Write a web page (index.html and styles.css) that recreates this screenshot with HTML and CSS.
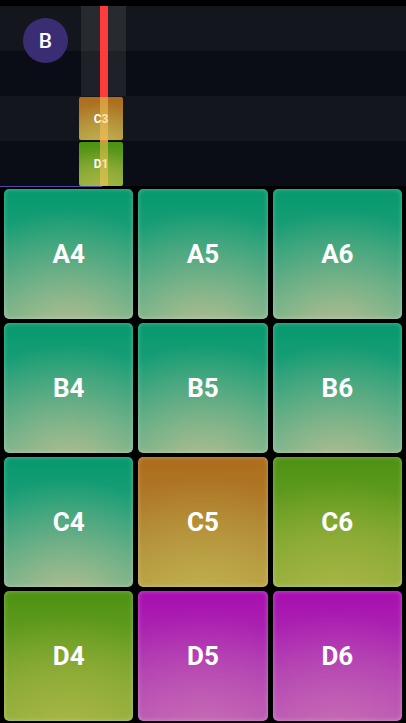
FILE: index.html
```html
<!DOCTYPE html>
<html>
<head>
<meta charset="utf-8">
<link rel="stylesheet" href="styles.css">
</head>
<body>
<div class="app">
  <div class="timeline">
    <div class="row light"></div>
    <div class="row dark"></div>
    <div class="row light"></div>
    <div class="row dark"></div>
    <div class="col-hl"></div>
    <div class="playhead"></div>
    <div class="note note-c3 orange"><span>C3</span></div>
    <div class="note note-d1 green"><span>D1</span></div>
    <div class="playhead-over"></div>
    <div class="avatar">B</div>
  </div>
  <div class="progress"><div class="progress-fill"></div></div>
  <div class="pads">
    <div class="pad teal">A4</div>
    <div class="pad teal">A5</div>
    <div class="pad teal">A6</div>
    <div class="pad teal">B4</div>
    <div class="pad teal">B5</div>
    <div class="pad teal">B6</div>
    <div class="pad teal">C4</div>
    <div class="pad orange">C5</div>
    <div class="pad green">C6</div>
    <div class="pad green">D4</div>
    <div class="pad magenta">D5</div>
    <div class="pad magenta">D6</div>
  </div>
</div>
</body>
</html>
```

FILE: styles.css
```css
* { box-sizing: border-box; }
html, body { margin: 0; padding: 0; background: #000; }
body { font-family: Roboto, "Noto Sans", sans-serif; color: #fff; }
.app { width: 406px; height: 723px; padding-top: 6px; display: flex; flex-direction: column; overflow: hidden; }

.timeline { position: relative; height: 180px; display: flex; flex-direction: column; }
.row { height: 45px; }
.row.light { background: #13161c; }
.row.dark { background: #0a0d15; }

.col-hl { position: absolute; left: 81px; top: 0; width: 45px; height: 90px; background: rgba(255,255,255,0.085); }
.playhead { position: absolute; left: 100px; top: 0; width: 8px; height: 180px; background: #ff3b3b; }
.playhead-over { position: absolute; left: 100px; top: 91px; width: 8px; height: 89px; background: rgba(255,200,90,0.5); }

.note { position: absolute; left: 79px; width: 44px; border-radius: 2px; display: flex; align-items: center; justify-content: center; font-size: 12px; font-weight: 700; }
.note-c3 { top: 91px; height: 43px; }
.note-d1 { top: 136px; height: 44px; }

.avatar { position: absolute; left: 23px; top: 12px; width: 45px; height: 45px; border-radius: 50%; background: #3b2d73; display: flex; align-items: center; justify-content: center; font-size: 21px; font-weight: 500; }

.progress { height: 1px; margin-bottom: 2px; }
.progress-fill { width: 102px; height: 1px; background: #5546a8; }

.pads { display: grid; grid-template-columns: repeat(3, 1fr); grid-template-rows: repeat(4, 130px); column-gap: 5px; row-gap: 4px; padding: 0 4px; }
.pad { border-radius: 5px; display: flex; align-items: center; justify-content: center; font-size: 26px; font-weight: 700; box-shadow: inset 0 0 5px rgba(255,255,255,0.3); }

.teal { background: radial-gradient(circle at 50% 120%, rgba(215,195,145,0.8) 0, rgba(215,195,145,0.35) 45%, rgba(215,195,145,0) 80%), linear-gradient(#06996e, #2aa27e 60%, #4aac88); }
.orange { background: radial-gradient(circle at 50% 120%, rgba(195,185,85,0.8) 0, rgba(195,185,85,0.35) 45%, rgba(195,185,85,0) 80%), linear-gradient(#ad6c1c, #b08430 60%, #b4953c); }
.green { background: radial-gradient(circle at 50% 120%, rgba(180,185,75,0.85) 0, rgba(180,185,75,0.4) 45%, rgba(180,185,75,0) 80%), linear-gradient(#4c9212, #72a228 60%, #84aa34); }
.magenta { background: radial-gradient(circle at 50% 120%, rgba(210,125,180,0.7) 0, rgba(210,125,180,0.3) 45%, rgba(210,125,180,0) 80%), linear-gradient(#a80eb0, #ad36b2 60%, #b44cb4); }
```
